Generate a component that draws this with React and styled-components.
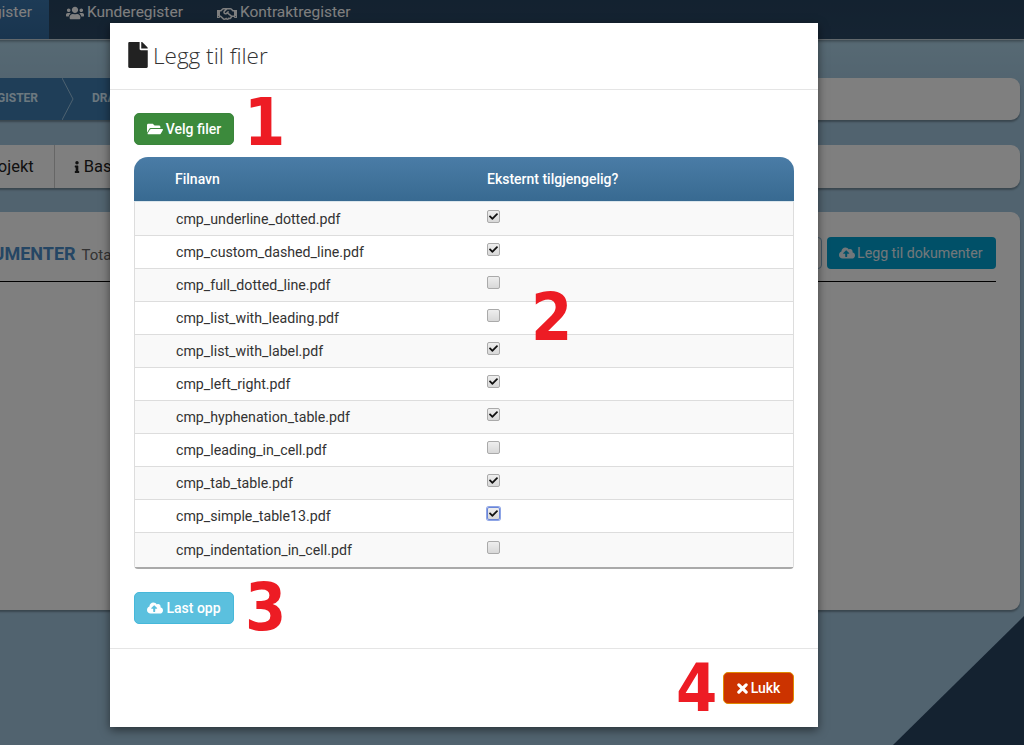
import React from "react";
import styled, { createGlobalStyle } from "styled-components";
import { FaFile, FaFolderOpen, FaCloudUploadAlt, FaUsers, FaRegHandshake, FaInfo, FaCheck } from "react-icons/fa";

const files = [
    { name: "cmp_underline_dotted.pdf", external: true },
    { name: "cmp_custom_dashed_line.pdf", external: true },
    { name: "cmp_full_dotted_line.pdf", external: false },
    { name: "cmp_list_with_leading.pdf", external: false },
    { name: "cmp_list_with_label.pdf", external: true },
    { name: "cmp_left_right.pdf", external: true },
    { name: "cmp_hyphenation_table.pdf", external: true },
    { name: "cmp_leading_in_cell.pdf", external: false },
    { name: "cmp_tab_table.pdf", external: true },
    { name: "cmp_simple_table13.pdf", external: true, focused: true },
    { name: "cmp_indentation_in_cell.pdf", external: false },
];

const GlobalStyle = createGlobalStyle`
    html, body {
        margin: 0;
        padding: 0;
        font-family: Roboto, "Liberation Sans", sans-serif;
    }
`;

const Page = styled.div`
    position: relative;
    width: 1024px;
    height: 745px;
    overflow: hidden;
    background: linear-gradient(#b8deef 0, #a3c7df 90px);
`;

const Corner = styled.div`
    position: absolute;
    inset: 0;
    background: #284460;
    clip-path: polygon(1024px 616px, 1024px 745px, 893px 745px);
`;

const Nav = styled.nav`
    position: relative;
    display: flex;
    height: 39px;
    margin-left: -94px;
    background: linear-gradient(#274460, #2b4865);
    border-bottom: 1px solid #c4d0d8;
    box-shadow: 0 1px 3px rgba(0, 0, 0, 0.4);
    color: #fff;
    font-size: 15.5px;
`;

const NavItem = styled.a`
    display: flex;
    align-items: flex-start;
    gap: 3px;
    padding: 3px 17px 0;
    background: ${p => (p.$active ? "linear-gradient(#3a76ac, #336a9e)" : "none")};

    svg {
        margin-top: 1px;
        font-size: 18px;
    }
`;

const Main = styled.main`
    position: relative;
    display: flex;
    flex-direction: column;
    width: 1052px;
    margin-left: -32px;
`;

const Panel = styled.section`
    background: #fff;
    border-radius: 9px;
    box-shadow: 0 2px 2px rgba(0, 0, 0, 0.3);
`;

const Breadcrumbs = styled(Panel)`
    display: flex;
    height: 42px;
    margin-top: 38px;
    overflow: hidden;
`;

const Crumb = styled.div`
    position: relative;
    display: flex;
    flex: none;
    align-items: center;
    justify-content: ${p => (p.$end ? "flex-end" : "flex-start")};
    width: ${p => p.$width}px;
    padding: ${p => (p.$end ? "0 36px 3px 0" : "0 0 3px 18px")};
    box-sizing: border-box;
    background: #3e7cb0;
    color: #d8f0ff;
    font-size: 12px;
    font-weight: 700;
    white-space: nowrap;
`;

const CrumbArrow = styled.svg`
    position: absolute;
    top: 0;
    right: 0;
    width: 12px;
    height: 42px;
    fill: none;
    stroke: #9cc4e0;
`;

const Tabs = styled(Panel)`
    display: flex;
    height: 43px;
    margin-top: 25px;
`;

const Tab = styled.div`
    display: flex;
    align-items: center;
    gap: 1px;
    padding: 0 20px 0 ${p => p.$pad}px;
    border-right: 1px solid #ccc;
    color: #222;
    font-size: 16.5px;
`;

const DocsPanel = styled(Panel)`
    height: 398px;
    box-sizing: border-box;
    margin-top: 24px;
    padding: 25px 24px 0 0;
`;

const DocsHeader = styled.div`
    display: flex;
    align-items: center;
    justify-content: space-between;
    height: 32px;
    padding: 0 0 12px 0;
    border-bottom: 1px solid #000;
`;

const DocsTitle = styled.h2`
    margin: 0 0 0 -11px;
    color: #4a8cc8;
    font-size: 18px;
    font-weight: 700;

    small {
        margin-left: 6px;
        color: #666;
        font-size: 15px;
        font-weight: 400;
    }
`;

const DocsActions = styled.div`
    display: flex;
    gap: 5px;
`;

const OutlineStub = styled.div`
    width: 60px;
    height: 32px;
    box-sizing: border-box;
    border: 1px solid #89b2cf;
    border-radius: 4px;
`;

const AddButton = styled.div`
    display: flex;
    align-items: center;
    gap: 2px;
    width: 169px;
    height: 32px;
    box-sizing: border-box;
    padding-left: 12px;
    border-radius: 4px;
    background: #00a0d0;
    color: #e4eff5;
    font-size: 14.2px;

    svg {
        font-size: 16px;
    }
`;

const Backdrop = styled.div`
    position: absolute;
    inset: 0;
    background: rgba(0, 0, 0, 0.5);
`;

const Modal = styled.div`
    position: absolute;
    top: 23px;
    left: 110px;
    width: 708px;
    height: 704px;
    background: #fff;
    box-shadow: 0 3px 9px rgba(0, 0, 0, 0.5);
`;

const ModalHeader = styled.header`
    display: flex;
    align-items: center;
    gap: 5px;
    height: 67px;
    box-sizing: border-box;
    padding: 0 18px 2px;
    border-bottom: 1px solid #e5e5e5;
    color: #333;

    svg {
        width: 20px;
        height: 26px;
        color: #222;
    }
`;

const ModalTitle = styled.h4`
    margin: 0;
    font-family: "Open Sans", sans-serif;
    font-size: 22.5px;
    font-weight: 300;
`;

const ModalBody = styled.div`
    display: flex;
    flex-direction: column;
    align-items: flex-start;
    height: 559px;
    box-sizing: border-box;
    padding: 23px 24px 0;
    border-bottom: 1px solid #e5e5e5;
`;

const Button = styled.button`
    display: flex;
    align-items: center;
    justify-content: center;
    gap: 3px;
    width: ${p => p.$width}px;
    height: 32px;
    padding: 0;
    border: 1px solid ${p => p.$border};
    border-radius: 5px;
    background: ${p => p.$bg};
    color: #fff;
    font-family: inherit;
    font-size: 14px;
    font-weight: 500;

    svg {
        font-size: 16px;
    }
`;

const CloseIcon = styled.svg`
    width: 11px;
    height: 11px;
    fill: none;
    stroke: #fff;
    stroke-width: 3.4;
    stroke-linecap: round;
`;

const Table = styled.div`
    width: 660px;
    margin: 12px 0 23px;
`;

const TableHead = styled.div`
    display: grid;
    grid-template-columns: 312px 1fr;
    align-items: center;
    height: 44px;
    padding-left: 41px;
    border-radius: 14px 14px 0 0;
    background: linear-gradient(#4a7ca6, #386a91);
    border-bottom: 1px solid #dbe6ec;
    color: #fff;
    font-size: 14px;
    font-weight: 500;
`;

const TableBody = styled.div`
    border: 1px solid #ddd;
    border-top: 0;
    border-bottom: 2px solid #aaa;
    border-radius: 0 0 4px 4px;
`;

const Row = styled.div`
    display: grid;
    grid-template-columns: 311px 1fr;
    align-items: center;
    height: 32.05px;
    padding-left: 41px;
    background: ${p => (p.$odd ? "#f9f9f9" : "#fff")};
    border-top: 1px solid #ddd;
    color: #333;
    font-size: 14.2px;

    &:first-child {
        border-top: 0;
        height: 33px;
    }

    &:last-child {
        height: 33.5px;
    }
`;

const Check = styled.span`
    display: flex;
    align-items: center;
    justify-content: center;
    width: 13px;
    height: 13px;
    margin: -5px 0 0 0;
    box-sizing: border-box;
    border: 1px solid ${p => (p.$focused ? "#6a85d8" : "#aaa")};
    border-radius: 2px;
    background: linear-gradient(#eee, #d8d8d8);
    box-shadow: ${p => (p.$focused ? "0 0 0 1px #8ea5e6" : "none")};
    color: #111;
    font-size: 9px;
`;

const ModalFooter = styled.footer`
    display: flex;
    justify-content: flex-end;
    padding: 23px 24px 0;
`;

const Marker = styled.span`
    position: absolute;
    top: ${p => p.$top}px;
    left: ${p => p.$left}px;
    color: #ed1c24;
    font-family: "DejaVu Sans Condensed", "DejaVu Sans", sans-serif;
    font-stretch: condensed;
    font-size: 66px;
    font-weight: 700;
    line-height: 1;
`;

export default function App() {
    return <Page>
        <GlobalStyle />
        <Corner />
        <Nav>
            <NavItem $active>Prosjektregister</NavItem>
            <NavItem><FaUsers />Kunderegister</NavItem>
            <NavItem><FaRegHandshake size={20} />Kontraktregister</NavItem>
        </Nav>
        <Main>
            <Breadcrumbs>
                <Crumb $width={106} $end>
                    BYGGREGISTER
                    <CrumbArrow viewBox="0 0 12 42"><path d="M0 0 L11 21 L0 42" /></CrumbArrow>
                </Crumb>
                <Crumb $width={120}>DRAFT</Crumb>
            </Breadcrumbs>
            <Tabs>
                <Tab $pad={14}>Projekt</Tab>
                <Tab $pad={16}><FaInfo size={12} />Basis</Tab>
            </Tabs>
            <DocsPanel>
                <DocsHeader>
                    <DocsTitle>DOKUMENTER<small>Totalt</small></DocsTitle>
                    <DocsActions>
                        <OutlineStub />
                        <AddButton><FaCloudUploadAlt />Legg til dokumenter</AddButton>
                    </DocsActions>
                </DocsHeader>
            </DocsPanel>
        </Main>
        <Backdrop />
        <Modal>
            <ModalHeader>
                <FaFile />
                <ModalTitle>Legg til filer</ModalTitle>
            </ModalHeader>
            <ModalBody>
                <Button $width={100} $bg="#3c8a3c" $border="#3a853b"><FaFolderOpen />Velg filer</Button>
                <Table>
                    <TableHead>
                        <div>Filnavn</div>
                        <div>Eksternt tilgjengelig?</div>
                    </TableHead>
                    <TableBody>
                        {files.map((file, i) => {
                            return <Row key={`file-${i}`} $odd={i % 2 === 0}>
                                <div>{file.name}</div>
                                <Check $focused={file.focused}>{file.external && <FaCheck />}</Check>
                            </Row>
                        })}
                    </TableBody>
                </Table>
                <Button $width={100} $bg="#5bc0de" $border="#46b8da"><FaCloudUploadAlt />Last opp</Button>
            </ModalBody>
            <ModalFooter>
                <Button $width={71} $bg="#cc3300" $border="#e08a00">
                    <CloseIcon viewBox="0 0 12 12"><path d="M2 2 L10 10 M10 2 L2 10" /></CloseIcon>
                    Lukk
                </Button>
            </ModalFooter>
            <Marker $top={67} $left={134}>1</Marker>
            <Marker $top={262} $left={421}>2</Marker>
            <Marker $top={552} $left={135}>3</Marker>
            <Marker $top={633} $left={566}>4</Marker>
        </Modal>
    </Page>
}
